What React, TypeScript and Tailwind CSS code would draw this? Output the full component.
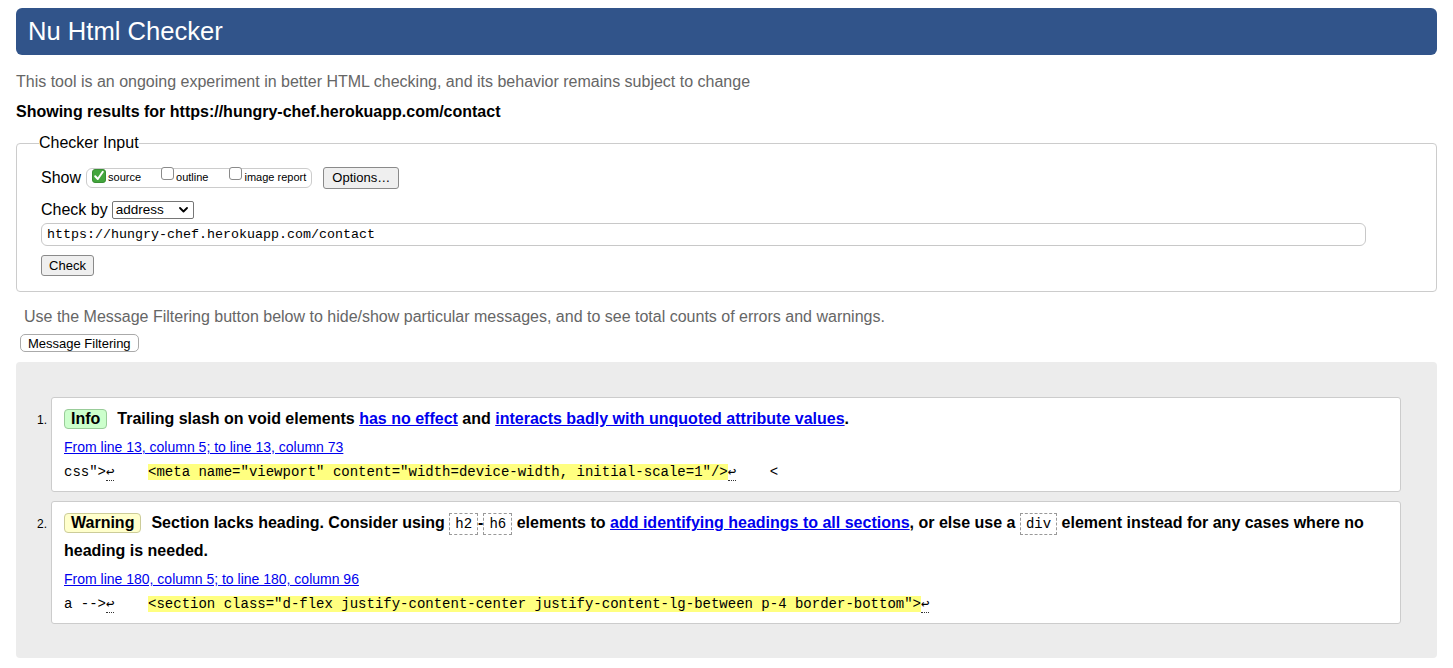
import React from "react"

const mono = "font-['Liberation_Mono','DejaVu_Sans_Mono',monospace]"

function Box({ checked }: { checked?: boolean }) {
  if (checked) {
    return (
      <svg width="14" height="14" viewBox="0 0 14 14" className="shrink-0 -translate-y-[2px]">
        <rect x="0.5" y="0.5" width="13" height="13" rx="2.5" fill="#43a63d" stroke="#3a8f35" />
        <path d="M3.2 7.2 L5.8 10 L10.8 2.8" fill="none" stroke="#fff" strokeWidth="2" strokeLinecap="round" strokeLinejoin="round" />
      </svg>
    )
  }
  return <span className="inline-block h-[13px] w-[13px] shrink-0 -translate-y-[2px] rounded-[3px] border border-[#8a8a8a] bg-white" />
}

function Code({ children }: { children: React.ReactNode }) {
  return (
    <code className={`${mono} border border-dashed border-[#999] px-[5px] py-[2px] text-[14px] font-normal leading-[16px]`}>
      {children}
    </code>
  )
}

function Link({ children }: { children: React.ReactNode }) {
  return <a href="#" className="text-[#0000ee] underline">{children}</a>
}

function Ret() {
  return <span className="border-b border-dotted border-[#333]">↩</span>
}

function Item({ n, children }: { n: number; children: React.ReactNode }) {
  return (
    <li className="flex">
      <span className="mt-[8px] w-[14px] shrink-0 pr-[4px] pt-[1px] text-right text-[12px] leading-[28px]">{n}.</span>
      <div className="flex-1 rounded-[3px] border border-[#ccc] bg-white px-[12px] pt-[7px] pb-[8px]">
        {children}
      </div>
    </li>
  )
}

export default function App() {
  return (
    <div className="min-h-screen bg-white px-4 pt-2 font-['Liberation_Sans',Arial,sans-serif] text-black">
      <header className="flex h-[47px] items-center rounded-[6px] bg-[#31548a] px-3">
        <h1 className="text-[25.6px] leading-none text-white">Nu Html Checker</h1>
      </header>

      <p className="mt-[17px] text-[16px] leading-[20px] text-[#666]">
        This tool is an ongoing experiment in better HTML checking, and its behavior remains subject to change
      </p>
      <p className="mt-[10px] text-[16px] font-bold leading-[20px]">
        Showing results for https://hungry-chef.herokuapp.com/contact
      </p>

      {/* Checker Input */}
      <fieldset className="mt-[12px] rounded-[4px] border border-[#ccc] px-[22px] pb-[14px]">
        <legend className="px-0 text-[16px] leading-[18px]">Checker Input</legend>
        <div className="pl-[2px]">
          <div className="mt-[14px] flex h-[23px] items-center">
            <span className="text-[16px]">Show</span>
            <div className="ml-[5px] flex h-[20px] items-center rounded-[6px] border border-[#ccc] pl-[5px] pr-[5px] text-[11px]">
              <Box checked />
              <span className="ml-[2px]">source</span>
              <span className="ml-[20px]"><Box /></span>
              <span className="ml-[2px]">outline</span>
              <span className="ml-[21px]"><Box /></span>
              <span className="ml-[2px]">image report</span>
            </div>
            <button className="ml-[11px] h-[22px] w-[76px] rounded-[3px] border border-[#8a8a8a] bg-[#efefef] text-[13px]">
              Options…
            </button>
          </div>

          <div className="mt-[10px] flex h-[22px] items-center">
            <span className="text-[16px]">Check by</span>
            <div className="ml-[4px] flex h-[18px] w-[82px] items-center justify-between rounded-[2px] border border-[#767676] bg-white pl-[3px] pr-[5px] text-[13.5px]">
              <span>address</span>
              <svg width="9" height="6" viewBox="0 0 9 6">
                <path d="M1 1 L4.5 4.5 L8 1" fill="none" stroke="#000" strokeWidth="1.8" strokeLinecap="round" strokeLinejoin="round" />
              </svg>
            </div>
          </div>

          <input
            readOnly
            defaultValue="https://hungry-chef.herokuapp.com/contact"
            className={`${mono} mt-[2px] block h-[23px] w-[1325px] rounded-[6px] border border-[#c8c8c8] px-[5px] text-[13.33px] outline-none`}
          />

          <button className="mt-[9px] h-[21px] w-[53px] rounded-[3px] border border-[#8a8a8a] bg-[#efefef] text-[13px]">
            Check
          </button>
        </div>
      </fieldset>

      <p className="ml-[8px] mt-[15px] text-[16px] leading-[20px] text-[#666]">
        Use the Message Filtering button below to hide/show particular messages, and to see total counts of errors and warnings.
      </p>
      <button className="ml-[4px] mt-[7px] block h-[18px] rounded-[5px] border border-[#aaa] bg-white px-[7px] text-[13px] leading-none">
        Message Filtering
      </button>

      {/* Results */}
      <ol className="mt-[10px] flex flex-col gap-[9px] rounded-[4px] bg-[#ececec] pb-[34px] pl-[21px] pr-[36px] pt-[35px]">
        <Item n={1}>
          <p className="text-[16px] font-bold leading-[28px]">
            <strong className="mr-[10px] inline-block rounded-[4px] border border-[#99cc99] bg-[#ccffcc] px-[6px] leading-[18px]">Info</strong>
            Trailing slash on void elements <Link>has no effect</Link> and <Link>interacts badly with unquoted attribute values</Link>.
          </p>
          <p className="text-[14px] leading-[28px]">
            <Link>From line 13, column 5; to line 13, column 73</Link>
          </p>
          <p className={`${mono} whitespace-pre text-[14px] leading-[22px]`}>
            css"&gt;<Ret />{"    "}
            <span className="bg-[#ffff80]">&lt;meta name="viewport" content="width=device-width, initial-scale=1"/&gt;</span>
            <Ret />{"    "}&lt;
          </p>
        </Item>

        <Item n={2}>
          <p className="text-[16px] font-bold leading-[28px]">
            <strong className="mr-[10px] inline-block rounded-[4px] border border-[#cccc99] bg-[#ffffcc] px-[6px] leading-[18px]">Warning</strong>
            Section lacks heading. Consider using <Code>h2</Code>-<Code>h6</Code> elements to{" "}
            <Link>add identifying headings to all sections</Link>, or else use a <Code>div</Code> element instead for any cases where no heading is needed.
          </p>
          <p className="text-[14px] leading-[28px]">
            <Link>From line 180, column 5; to line 180, column 96</Link>
          </p>
          <p className={`${mono} whitespace-pre text-[14px] leading-[22px]`}>
            a --&gt;<Ret />{"    "}
            <span className="bg-[#ffff80]">&lt;section class="d-flex justify-content-center justify-content-lg-between p-4 border-bottom"&gt;</span>
            <Ret />
          </p>
        </Item>
      </ol>
    </div>
  )
}
